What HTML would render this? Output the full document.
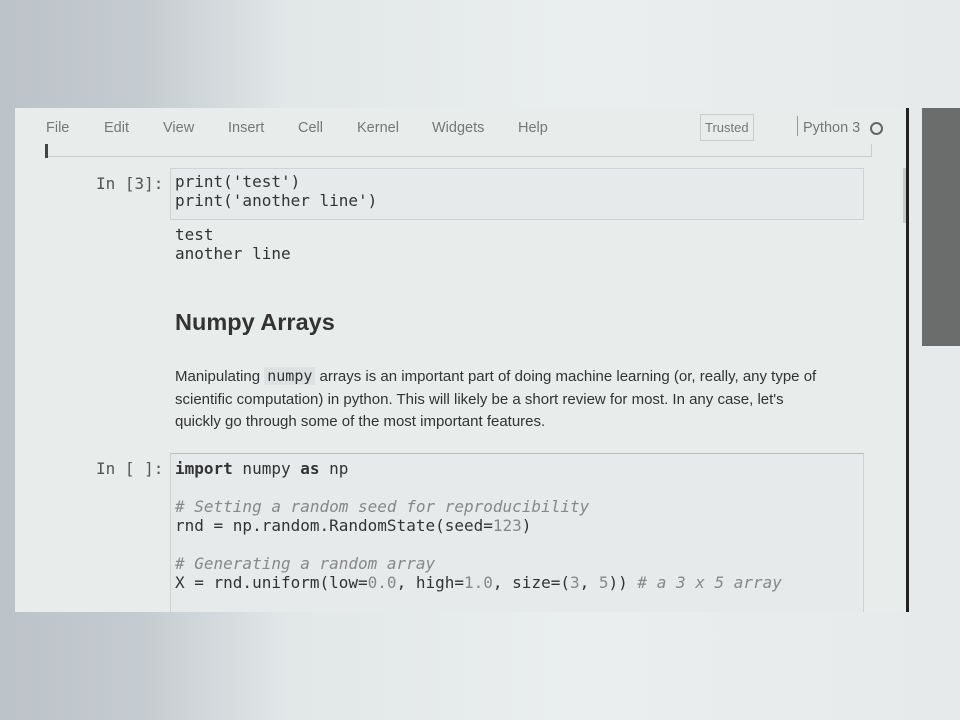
<!DOCTYPE html>
<html><head><style>
body{margin:0;width:960px;height:720px;overflow:hidden;position:relative;font-family:"Liberation Sans",sans-serif;
background:linear-gradient(90deg,#bcc3c8 0%,#c5ccd0 15%,#e2e7e8 30%,#eaeeee 60%,#e6eaea 100%);}
.screen{position:absolute;left:15px;top:108px;width:893px;height:504px;background:#e8eceb;overflow:hidden}
.rb{position:absolute;left:906px;top:108px;width:3px;height:504px;background:#222}
.dark{position:absolute;left:922px;top:108px;width:38px;height:238px;background:#6a6d6c}
.menu span{position:absolute;top:12px;font-size:14.5px;color:#777}
.mono{font-family:"DejaVu Sans Mono","Liberation Mono",monospace;font-size:16px;color:#333}
.abs{position:absolute}
.box{position:absolute;border:1px solid #cfd3d3;background:#e6eaea}
</style></head><body>
<div class="screen">
 <div class="menu">
  <span style="left:31px">File</span><span style="left:89px">Edit</span><span style="left:148px">View</span>
  <span style="left:213px">Insert</span><span style="left:283px">Cell</span><span style="left:342px">Kernel</span>
  <span style="left:417px">Widgets</span><span style="left:503px">Help</span>
  <span style="left:685px;top:6px;border:1px solid #ccc;padding:5px 4px;font-size:13px">Trusted</span>
  <span style="left:782px;top:8px;width:1px;height:20px;background:#999"></span>
  <span style="left:788px">Python 3</span>
  <span style="left:855px;top:14px;width:9px;height:9px;border:2px solid #666;border-radius:50%"></span>
 </div>
 <div class="abs" style="left:31px;top:36px;width:824px;height:12px;border:1px solid #ccc;border-top:none"></div>
 <div class="abs" style="left:30px;top:36px;width:3px;height:14px;background:#444"></div>
 <div class="abs" style="left:888px;top:60px;width:4px;height:55px;background:#c8cccc"></div>
 <div class="abs mono" style="left:81px;top:66px;color:#555">In [3]:</div>
 <div class="box" style="left:155px;top:60px;width:692px;height:50px"></div>
 <div class="abs mono" style="left:160px;top:64px;line-height:19px">print('test')<br>print('another line')</div>
 <div class="abs mono" style="left:160px;top:117px;line-height:19px">test<br>another line</div>
 <div class="abs" style="left:160px;top:201px;font-size:23.5px;font-weight:bold;color:#333">Numpy Arrays</div>
 <div class="abs" style="left:160px;top:257px;font-size:15px;line-height:22.5px;color:#333;width:650px">Manipulating <span class="mono" style="background:#dde1e1;padding:0 3px;font-size:15px">numpy</span> arrays is an important part of doing machine learning (or, really, any type of scientific computation) in python. This will likely be a short review for most. In any case, let's quickly go through some of the most important features.</div>
 <div class="abs mono" style="left:81px;top:351px;color:#555">In [ ]:</div>
 <div class="box" style="left:155px;top:345px;width:692px;height:170px;border-top-color:#bbb"></div>
 <div class="abs mono" style="left:160px;top:351px;line-height:19px"><b>import</b> numpy <b>as</b> np<br><br><i style="color:#888"># Setting a random seed for reproducibility</i><br>rnd = np.random.RandomState(seed=<span style="color:#888">123</span>)<br><br><i style="color:#888"># Generating a random array</i><br>X = rnd.uniform(low=<span style="color:#888">0.0</span>, high=<span style="color:#888">1.0</span>, size=(<span style="color:#888">3</span>, <span style="color:#888">5</span>))  <i style="color:#888"># a 3 x 5 array</i></div>
</div>
<div class="rb"></div>
<div class="dark"></div>
</body></html>
